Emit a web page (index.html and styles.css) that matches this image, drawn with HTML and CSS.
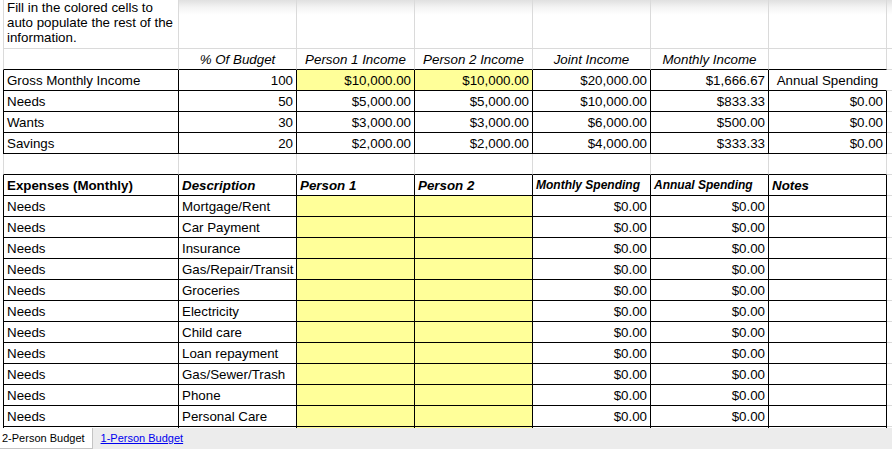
FILE: index.html
```html
<!DOCTYPE html>
<html>
<head>
<meta charset="utf-8">
<link rel="stylesheet" href="styles.css">
</head>
<body>
<div class="sheet">
  <div class="grid">
    <!-- row 1 -->
    <div class="cell colA note">Fill in the colored cells to auto populate the rest of the information.</div>
    <div class="cell shade"></div><div class="cell shade"></div><div class="cell shade"></div><div class="cell shade"></div><div class="cell shade"></div><div class="cell shade"></div><div class="cell shade"></div>
    <!-- row 2 -->
    <div class="cell colA kb"></div>
    <div class="cell kb i c">% Of Budget</div>
    <div class="cell kb i c">Person 1 Income</div>
    <div class="cell kb i c">Person 2 Income</div>
    <div class="cell kb i c">Joint Income</div>
    <div class="cell kb i c">Monthly Income</div>
    <div class="cell kb"></div>
    <div class="cell"></div>
    <!-- row 3 -->
    <div class="cell colA k">Gross Monthly Income</div>
    <div class="cell k r">100</div>
    <div class="cell k r y">$10,000.00</div>
    <div class="cell k r y">$10,000.00</div>
    <div class="cell k r">$20,000.00</div>
    <div class="cell k r">$1,666.67</div>
    <div class="cell kb nr c">Annual Spending</div>
    <div class="cell"></div>
    <!-- row 4 -->
    <div class="cell colA k">Needs</div>
    <div class="cell k r">50</div>
    <div class="cell k r">$5,000.00</div>
    <div class="cell k r">$5,000.00</div>
    <div class="cell k r">$10,000.00</div>
    <div class="cell k r">$833.33</div>
    <div class="cell k r">$0.00</div>
    <div class="cell"></div>
    <!-- row 5 -->
    <div class="cell colA k">Wants</div>
    <div class="cell k r">30</div>
    <div class="cell k r">$3,000.00</div>
    <div class="cell k r">$3,000.00</div>
    <div class="cell k r">$6,000.00</div>
    <div class="cell k r">$500.00</div>
    <div class="cell k r">$0.00</div>
    <div class="cell"></div>
    <!-- row 6 -->
    <div class="cell colA k">Savings</div>
    <div class="cell k r">20</div>
    <div class="cell k r">$2,000.00</div>
    <div class="cell k r">$2,000.00</div>
    <div class="cell k r">$4,000.00</div>
    <div class="cell k r">$333.33</div>
    <div class="cell k r">$0.00</div>
    <div class="cell"></div>
    <!-- row 7 -->
    <div class="cell colA kb"></div>
    <div class="cell kb"></div><div class="cell kb"></div><div class="cell kb"></div><div class="cell kb"></div><div class="cell kb"></div><div class="cell kb"></div>
    <div class="cell"></div>
    <!-- row 8 -->
    <div class="cell colA k b">Expenses (Monthly)</div>
    <div class="cell k bi">Description</div>
    <div class="cell k bi">Person 1</div>
    <div class="cell k bi">Person 2</div>
    <div class="cell k bi sm">Monthly Spending</div>
    <div class="cell k bi sm">Annual Spending</div>
    <div class="cell k bi">Notes</div>
    <div class="cell"></div>
    <!-- expense rows -->
    <div class="cell colA k">Needs</div><div class="cell k">Mortgage/Rent</div><div class="cell k y"></div><div class="cell k y"></div><div class="cell k r">$0.00</div><div class="cell k r">$0.00</div><div class="cell k"></div><div class="cell"></div>
    <div class="cell colA k">Needs</div><div class="cell k">Car Payment</div><div class="cell k y"></div><div class="cell k y"></div><div class="cell k r">$0.00</div><div class="cell k r">$0.00</div><div class="cell k"></div><div class="cell"></div>
    <div class="cell colA k">Needs</div><div class="cell k">Insurance</div><div class="cell k y"></div><div class="cell k y"></div><div class="cell k r">$0.00</div><div class="cell k r">$0.00</div><div class="cell k"></div><div class="cell"></div>
    <div class="cell colA k">Needs</div><div class="cell k">Gas/Repair/Transit</div><div class="cell k y"></div><div class="cell k y"></div><div class="cell k r">$0.00</div><div class="cell k r">$0.00</div><div class="cell k"></div><div class="cell"></div>
    <div class="cell colA k">Needs</div><div class="cell k">Groceries</div><div class="cell k y"></div><div class="cell k y"></div><div class="cell k r">$0.00</div><div class="cell k r">$0.00</div><div class="cell k"></div><div class="cell"></div>
    <div class="cell colA k">Needs</div><div class="cell k">Electricity</div><div class="cell k y"></div><div class="cell k y"></div><div class="cell k r">$0.00</div><div class="cell k r">$0.00</div><div class="cell k"></div><div class="cell"></div>
    <div class="cell colA k">Needs</div><div class="cell k">Child care</div><div class="cell k y"></div><div class="cell k y"></div><div class="cell k r">$0.00</div><div class="cell k r">$0.00</div><div class="cell k"></div><div class="cell"></div>
    <div class="cell colA k">Needs</div><div class="cell k">Loan repayment</div><div class="cell k y"></div><div class="cell k y"></div><div class="cell k r">$0.00</div><div class="cell k r">$0.00</div><div class="cell k"></div><div class="cell"></div>
    <div class="cell colA k">Needs</div><div class="cell k">Gas/Sewer/Trash</div><div class="cell k y"></div><div class="cell k y"></div><div class="cell k r">$0.00</div><div class="cell k r">$0.00</div><div class="cell k"></div><div class="cell"></div>
    <div class="cell colA k">Needs</div><div class="cell k">Phone</div><div class="cell k y"></div><div class="cell k y"></div><div class="cell k r">$0.00</div><div class="cell k r">$0.00</div><div class="cell k"></div><div class="cell"></div>
    <div class="cell colA k">Needs</div><div class="cell k">Personal Care</div><div class="cell k y"></div><div class="cell k y"></div><div class="cell k r">$0.00</div><div class="cell k r">$0.00</div><div class="cell k"></div><div class="cell"></div>
    <div class="cell colA k"></div><div class="cell k"></div><div class="cell k y"></div><div class="cell k y"></div><div class="cell k"></div><div class="cell k"></div><div class="cell k"></div><div class="cell"></div>
  </div>
</div>
<div class="tabs">
  <div class="tab active">2-Person Budget</div>
  <a class="tab link" href="#">1-Person Budget</a>
</div>
</body>
</html>
```

FILE: styles.css
```css
* { box-sizing: border-box; }

html, body {
  margin: 0;
  padding: 0;
  background: #fff;
}

body {
  width: 892px;
  height: 449px;
  overflow: hidden;
  font-family: "Liberation Sans", Arial, sans-serif;
  font-size: 10pt;
  color: #000;
}

.sheet {
  height: 428px;
  overflow: hidden;
  padding-left: 3px;
}

.grid {
  display: grid;
  grid-template-columns: 176px repeat(7, 118px);
  grid-template-rows: 49px repeat(20, 21px);
  width: max-content;
}

.cell {
  border-right: 1px solid #dadada;
  border-bottom: 1px solid #dadada;
  padding: 1px 3px 0 3px;
  line-height: 19px;
  white-space: nowrap;
  overflow: hidden;
  background: #fff;
}

.colA {
  border-left: 1px solid #dadada;
}

.note {
  white-space: normal;
  line-height: 15px;
  padding: 0 3px;
}

.shade {
  background: linear-gradient(#e0e0e0 0, #f3f3f3 7px, #ffffff 15px);
}

.kb { border-bottom-color: #000; }
.k { border-bottom-color: #000; border-right-color: #000; }
.colA.k { border-left-color: #000; }
.nr { border-right-color: #fff; }

.y { background: #ffff99; }
.r { text-align: right; }
.c { text-align: center; }
.i { font-style: italic; }
.b { font-weight: bold; }
.bi { font-weight: bold; font-style: italic; }
.sm { font-size: 9pt; }

.tabs {
  height: 21px;
  background: #ececec;
  display: flex;
  align-items: flex-start;
  font-size: 11px;
}

.tab {
  line-height: 20px;
  white-space: nowrap;
}

.active {
  background: #fff;
  padding: 0 7px 0 2px;
  border-right: 1px solid #c4c4c4;
  border-bottom: 1px solid #c4c4c4;
  height: 21px;
}

.link {
  margin-left: 8px;
  color: #0000ee;
  text-decoration: underline;
}
```
